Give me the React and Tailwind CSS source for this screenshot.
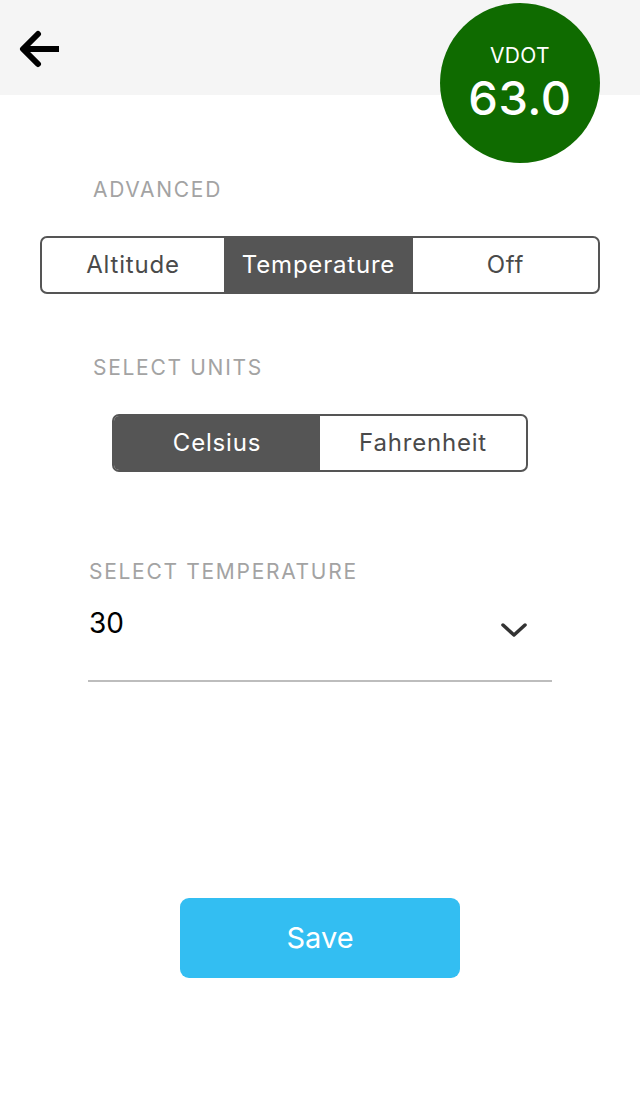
import React from "react";

const font = { fontFamily: "Inter, 'Liberation Sans', sans-serif" };

export default function App() {
  return (
    <div className="relative w-[640px] h-[1098px] bg-white overflow-hidden" style={font}>
      <div className="h-[95px] bg-[#f5f5f5] flex items-start pl-[18px] pt-[30px]">
        <svg width="44" height="38" viewBox="0 0 44 38" fill="none">
          <path d="M5 19 H41" stroke="#000" strokeWidth="6" strokeLinecap="butt" />
          <path d="M20 4 L5 19 L20 34" stroke="#000" strokeWidth="6" strokeLinecap="round" strokeLinejoin="round" />
        </svg>
      </div>
      <div className="absolute left-[440px] top-[3px] w-[160px] h-[160px] rounded-full bg-[#0f6b00] flex flex-col items-center text-white">
        <div className="mt-[40px] text-[21px] leading-[26px] tracking-[0.3px]">VDOT</div>
        <div className="mt-[4px] text-[47px] leading-[50px] font-medium tracking-[0.5px]">63.0</div>
      </div>

      <div className="pt-[83px] pl-[93px] text-[21px] leading-[24px] text-[#a3a3a3] tracking-[1.7px]">ADVANCED</div>
      <div className="mt-[34px] mx-[40px] h-[58px] border-2 border-[#555] rounded-[7px] flex overflow-hidden text-[24px] tracking-[0.8px] text-[#4a4a4a]">
        <div className="w-[182px] flex items-center justify-center">Altitude</div>
        <div className="w-[189px] flex items-center justify-center bg-[#555] text-white">Temperature</div>
        <div className="flex-1 flex items-center justify-center">Off</div>
      </div>

      <div className="mt-[62px] pl-[93px] text-[21px] leading-[24px] text-[#a3a3a3] tracking-[1.7px]">SELECT UNITS</div>
      <div className="mt-[34px] ml-[112px] w-[416px] h-[58px] border-2 border-[#555] rounded-[7px] flex overflow-hidden text-[24px] tracking-[0.8px] text-[#4a4a4a]">
        <div className="flex-1 flex items-center justify-center bg-[#555] text-white">Celsius</div>
        <div className="flex-1 flex items-center justify-center">Fahrenheit</div>
      </div>

      <div className="mt-[88px] pl-[89px] text-[21px] leading-[24px] text-[#a3a3a3] tracking-[1.7px]">SELECT TEMPERATURE</div>
      <div className="ml-[88px] w-[464px] h-[98px] border-b-2 border-[#bdbdbd] flex items-start justify-between pt-[23px]">
        <div className="pl-[1px] text-[28px] leading-[32px] text-black">30</div>
        <svg className="mr-[24px] mt-[14px]" width="28" height="18" viewBox="0 0 28 18" fill="none">
          <path d="M3 4 L14 14 L25 4" stroke="#333" strokeWidth="3.5" strokeLinecap="round" strokeLinejoin="round" />
        </svg>
      </div>

      <div className="mt-[216px] flex justify-center">
        <button className="w-[280px] h-[80px] rounded-[9px] bg-[#33bef2] text-white text-[29px]">Save</button>
      </div>
    </div>
  );
}
